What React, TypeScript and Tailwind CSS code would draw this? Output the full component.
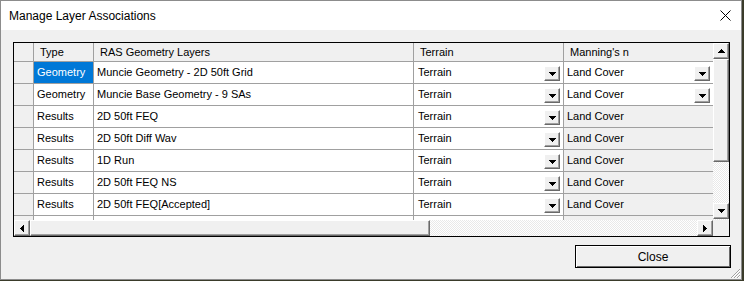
import React from "react";

const Down = () => (
  <svg width="7" height="4" shapeRendering="crispEdges" className="block">
    <rect x="0" y="0" width="7" height="1" fill="#000" />
    <rect x="1" y="1" width="5" height="1" fill="#000" />
    <rect x="2" y="2" width="3" height="1" fill="#000" />
    <rect x="3" y="3" width="1" height="1" fill="#000" />
  </svg>
);
const Up = () => (
  <svg width="7" height="4" shapeRendering="crispEdges" className="block">
    <rect x="3" y="0" width="1" height="1" fill="#000" />
    <rect x="2" y="1" width="3" height="1" fill="#000" />
    <rect x="1" y="2" width="5" height="1" fill="#000" />
    <rect x="0" y="3" width="7" height="1" fill="#000" />
  </svg>
);
const Left = () => (
  <svg width="4" height="7" shapeRendering="crispEdges" className="block">
    <rect x="3" y="0" width="1" height="7" fill="#000" />
    <rect x="2" y="1" width="1" height="5" fill="#000" />
    <rect x="1" y="2" width="1" height="3" fill="#000" />
    <rect x="0" y="3" width="1" height="1" fill="#000" />
  </svg>
);
const Right = () => (
  <svg width="4" height="7" shapeRendering="crispEdges" className="block">
    <rect x="0" y="0" width="1" height="7" fill="#000" />
    <rect x="1" y="1" width="1" height="5" fill="#000" />
    <rect x="2" y="2" width="1" height="3" fill="#000" />
    <rect x="3" y="3" width="1" height="1" fill="#000" />
  </svg>
);

const btn3d =
  "bg-[#f0f0f0] border border-t-white border-l-white border-r-[#696969] border-b-[#696969] shadow-[inset_-1px_-1px_0_#a0a0a0] flex items-center justify-center";

const hatch =
  "bg-[repeating-conic-gradient(#ffffff_0_25%,#e9e9e9_0_50%)] bg-[length:2px_2px]";

type Row = { type: string; name: string; sel?: boolean; drop?: boolean };
const rows: Row[] = [
  { type: "Geometry", name: "Muncie Geometry - 2D 50ft Grid", sel: true, drop: true },
  { type: "Geometry", name: "Muncie Base Geometry - 9 SAs", drop: true },
  { type: "Results", name: "2D 50ft FEQ" },
  { type: "Results", name: "2D 50ft Diff Wav" },
  { type: "Results", name: "1D Run" },
  { type: "Results", name: "2D 50ft FEQ NS" },
  { type: "Results", name: "2D 50ft FEQ[Accepted]" },
];

const DropBtn = () => (
  <div className={`${btn3d} w-[16px] h-[15px] shrink-0`}>
    <Down />
  </div>
);

export default function App() {
  return (
    <div className="w-[744px] h-[281px] bg-[#3a3b2a] font-['Liberation_Sans',Arial,sans-serif] text-[11px] text-black leading-none">
      <div className="w-[742px] h-[280px] border border-[#8c8c8c] bg-[#f0f0f0] flex flex-col relative">
        {/* title bar */}
        <div className="h-[29px] bg-white flex items-center justify-between pl-[8px] pr-[8px] shrink-0">
          <span className="text-[12px] text-black">Manage Layer Associations</span>
          <svg width="11" height="11" viewBox="0 0 11 11" className="mr-[2px]">
            <path d="M0.5 0.5 L10.5 10.5 M10.5 0.5 L0.5 10.5" stroke="#000" strokeWidth="1" />
          </svg>
        </div>
        {/* grid */}
        <div className="pl-[12px] pt-[12px]">
          <div className="w-[717px] h-[195px] border border-black bg-[#f0f0f0] flex flex-col">
            <div className="flex h-[177px]">
              <div className="w-[699px] h-[177px] overflow-hidden bg-white">
                {/* header */}
                <div className="flex h-[19px] border-b border-[#a0a0a0] bg-[#f0f0f0]">
                  <div className="w-[20px] border-r border-[#a0a0a0]" />
                  <div className="w-[60px] border-r border-[#a0a0a0] flex items-center pl-[6px]">Type</div>
                  <div className="w-[320px] border-r border-[#a0a0a0] flex items-center pl-[6px]">RAS Geometry Layers</div>
                  <div className="w-[150px] border-r border-[#a0a0a0] flex items-center pl-[6px]">Terrain</div>
                  <div className="w-[149px] flex items-center pl-[6px]">Manning's n</div>
                </div>
                {rows.map((r, i) => (
                  <div key={i} className="flex h-[22px] border-b border-[#a0a0a0]">
                    <div className="w-[20px] border-r border-[#a0a0a0] bg-[#f0f0f0]" />
                    <div
                      className={`w-[60px] border-r border-[#a0a0a0] flex items-center pl-[3px] ${
                        r.sel ? "bg-[#0078d7] text-white" : "bg-white"
                      }`}
                    >
                      {r.type}
                    </div>
                    <div className="w-[320px] border-r border-[#a0a0a0] flex items-center pl-[3px] bg-white">
                      {r.name}
                    </div>
                    <div className="w-[150px] border-r border-[#a0a0a0] flex items-center justify-between pl-[4px] pr-[3px] pt-[2px] bg-white">
                      <span className="-mt-[2px]">Terrain</span>
                      <DropBtn />
                    </div>
                    <div
                      className={`w-[149px] flex items-center justify-between pl-[3px] pr-[3px] pt-[2px] ${
                        r.drop ? "bg-white" : "bg-[#f0f0f0]"
                      }`}
                    >
                      <span className="-mt-[2px]">Land Cover</span>
                      {r.drop && <DropBtn />}
                    </div>
                  </div>
                ))}
                {/* partial row */}
                <div className="flex h-[22px]">
                  <div className="w-[20px] border-r border-[#a0a0a0] bg-[#f0f0f0]" />
                  <div className="w-[60px] border-r border-[#a0a0a0] bg-white" />
                  <div className="w-[320px] border-r border-[#a0a0a0] bg-white" />
                  <div className="w-[150px] border-r border-[#a0a0a0] flex items-start justify-end pr-[3px] pt-[4px] bg-white">
                    <DropBtn />
                  </div>
                  <div className="w-[149px] bg-[#f0f0f0]" />
                </div>
              </div>
              {/* vertical scrollbar */}
              <div className={`w-[16px] h-[177px] flex flex-col ${hatch}`}>
                <div className={`${btn3d} w-[16px] h-[16px] shrink-0`}>
                  <Up />
                </div>
                <div className={`${btn3d} w-[16px] h-[103px] shrink-0`} />
                <div className="flex-1" />
                <div className={`${btn3d} w-[16px] h-[16px] shrink-0`}>
                  <Down />
                </div>
                <div className="h-[1px]" />
              </div>
            </div>
            {/* horizontal scrollbar */}
            <div className="flex h-[16px]">
              <div className={`w-[699px] h-[16px] flex ${hatch}`}>
                <div className={`${btn3d} w-[16px] h-[16px] shrink-0`}>
                  <Left />
                </div>
                <div className={`${btn3d} w-[400px] h-[16px] shrink-0`} />
                <div className="flex-1" />
                <div className={`${btn3d} w-[16px] h-[16px] shrink-0`}>
                  <Right />
                </div>
              </div>
              <div className="w-[16px] h-[16px] bg-[#f0f0f0]" />
            </div>
          </div>
        </div>
        {/* close button */}
        <div className="pl-[574px] pt-[8px]">
          <div className="w-[156px] h-[23px] border border-black bg-[#f0f0f0] shadow-[inset_1px_1px_0_#ffffff,inset_-1px_-1px_0_#696969] flex items-center justify-center text-[12px]">
            Close
          </div>
        </div>
        {/* resize grip */}
        <svg width="12" height="12" className="absolute right-[0px] bottom-[0px]" shapeRendering="crispEdges">
          <path d="M11 2 L2 11 M11 5 L5 11 M11 8 L8 11" stroke="#a0a0a0" strokeWidth="1" />
          <path d="M11 3 L3 11 M11 6 L6 11 M11 9 L9 11" stroke="#ffffff" strokeWidth="1" />
        </svg>
      </div>
    </div>
  );
}
